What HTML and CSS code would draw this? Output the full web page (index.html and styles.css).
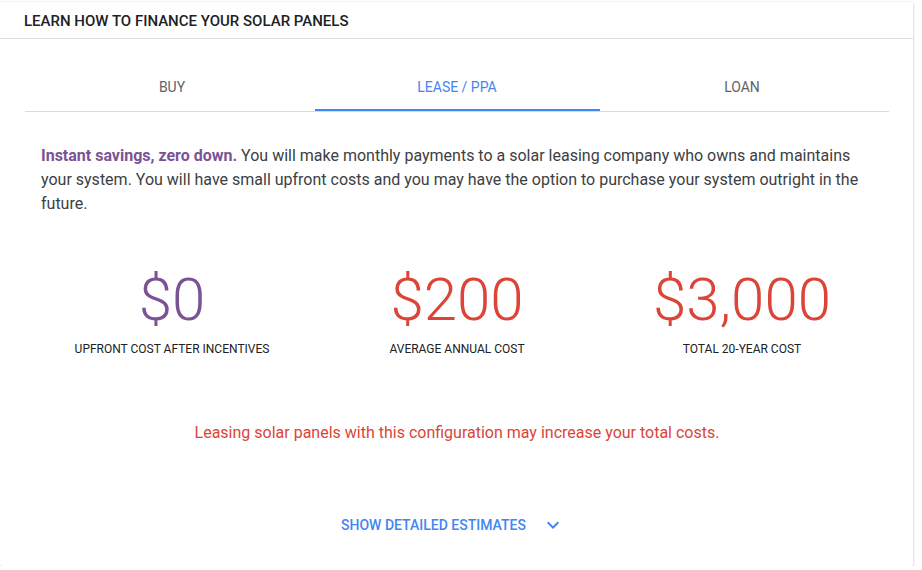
FILE: index.html
```html
<!DOCTYPE html>
<html lang="en">
<head>
    <meta charset="UTF-8">
    <meta name="viewport" content="width=device-width, initial-scale=1.0">
    <title>Finance Your Solar Panels</title>
    <link rel="stylesheet" href="styles.css">
</head>
<body>
    <div class="card">
        <div class="card-header">LEARN HOW TO FINANCE YOUR SOLAR PANELS</div>

        <div class="card-body">
            <div class="tabs">
                <div class="tab">BUY</div>
                <div class="tab active">LEASE / PPA</div>
                <div class="tab">LOAN</div>
            </div>

            <p class="intro">
                <strong>Instant savings, zero down.</strong> You will make monthly payments to a solar leasing company who owns and maintains your system. You will have small upfront costs and you may have the option to purchase your system outright in the future.
            </p>

            <div class="stats">
                <div class="stat">
                    <div class="amount good">$0</div>
                    <div class="label">UPFRONT COST AFTER INCENTIVES</div>
                </div>
                <div class="stat">
                    <div class="amount bad">$200</div>
                    <div class="label">AVERAGE ANNUAL COST</div>
                </div>
                <div class="stat">
                    <div class="amount bad">$3,000</div>
                    <div class="label">TOTAL 20-YEAR COST</div>
                </div>
            </div>

            <p class="warning">Leasing solar panels with this configuration may increase your total costs.</p>

            <div class="details">
                <span>SHOW DETAILED ESTIMATES</span>
                <svg width="24" height="24" viewBox="0 0 24 24"><path d="M7.41 8.59L12 13.17l4.59-4.58L18 10l-6 6-6-6 1.41-1.41z" fill="#4285f4"/></svg>
            </div>
        </div>
    </div>
</body>
</html>
```

FILE: styles.css
```css
body {
    margin: 0;
    padding: 2px 0 0 0;
    background-color: white;
    font-family: Roboto, "Noto Sans", Arial, sans-serif;
    color: #3c4043;
}
.card {
    width: 913px;
    height: 564px;
    background-color: white;
    border-radius: 2px;
    box-shadow: 0 1px 3px rgba(0, 0, 0, 0.28);
    box-sizing: border-box;
}
.card-header {
    height: 36px;
    padding: 0 24px;
    line-height: 39px;
    font-size: 15px;
    font-weight: 500;
    color: #202124;
    border-bottom: 1px solid #e0e0e0;
}
.card-body {
    padding: 0 24px 0 25px;
}
.tabs {
    display: grid;
    grid-template-columns: repeat(3, 285px);
    justify-content: center;
    margin-top: 30px;
    border-bottom: 1px solid #dadce0;
}
.tab {
    text-align: center;
    font-size: 14px;
    color: #5f6368;
    height: 42px;
    line-height: 36px;
    box-sizing: border-box;
}
.tab.active {
    color: #4285f4;
    border-bottom: 2px solid #4285f4;
    margin-bottom: -1px;
}
.intro {
    margin: 32px 16px 0 16px;
    font-size: 16px;
    line-height: 24px;
    color: #3c4043;
}
.intro strong {
    color: #7b5294;
    font-weight: 700;
}
.stats {
    display: grid;
    grid-template-columns: repeat(3, 285px);
    justify-content: center;
    margin-top: 46px;
}
.stat {
    text-align: center;
}
.amount {
    font-size: 60px;
    font-weight: 300;
    line-height: 76px;
}
.amount.good {
    color: #7b5294;
}
.amount.bad {
    color: #db4437;
}
.label {
    font-size: 12px;
    color: #202124;
    margin-top: 4px;
}
.warning {
    text-align: center;
    color: #db4437;
    font-size: 16px;
    margin: 67px 0 0 0;
}
.details {
    display: flex;
    align-items: center;
    justify-content: center;
    gap: 15px;
    margin-top: 71px;
    padding-right: 8px;
    color: #4285f4;
    font-size: 14px;
    font-weight: 500;
}
```
